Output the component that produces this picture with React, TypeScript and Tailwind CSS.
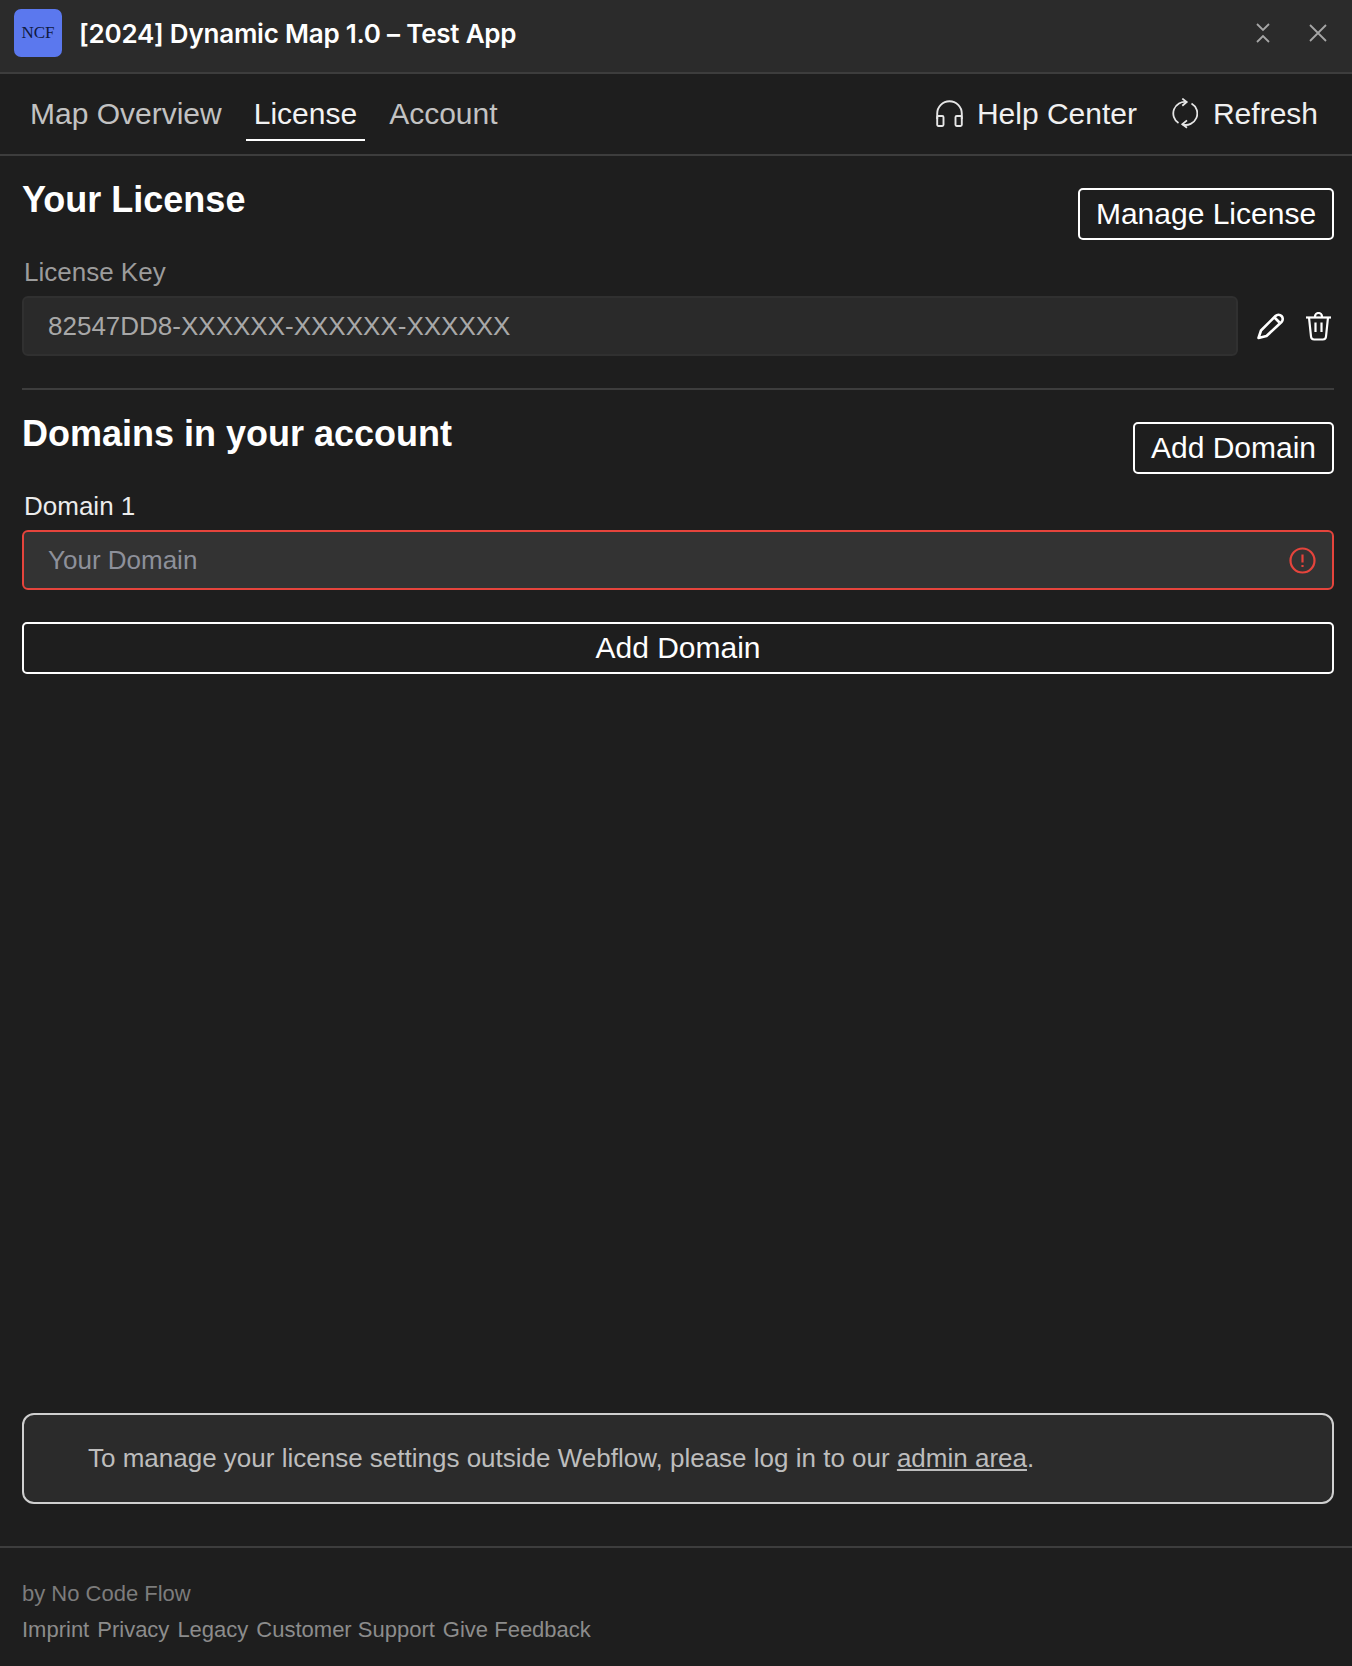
import * as React from "react";

const sans = "font-['Liberation_Sans',Arial,sans-serif]";

// small outline button used in the section headers
function OutlineButton({ children, className = "" }: { children: React.ReactNode; className?: string }) {
  return (
    <button className={`h-[52px] rounded-[5px] border-2 border-white text-[30px] leading-none text-white ${className}`}>
      {children}
    </button>
  );
}

function CollapseIcon() {
  return (
    <svg width="14" height="20" viewBox="0 0 14 20" fill="none" stroke="#a6a6a6" strokeWidth="1.8">
      <path d="M1 1 7 7 13 1" />
      <path d="M1 19 7 13 13 19" />
    </svg>
  );
}

function CloseIcon() {
  return (
    <svg width="18" height="18" viewBox="0 0 18 18" fill="none" stroke="#a6a6a6" strokeWidth="1.8">
      <path d="M1 1 17 17M17 1 1 17" />
    </svg>
  );
}

function HeadphonesIcon() {
  return (
    <svg width="27" height="27" viewBox="0 0 27 27" fill="none" stroke="#e6e6e6" strokeWidth="1.9">
      <path d="M1.2 19V13.5a12.3 12.3 0 0 1 24.6 0V19" />
      <rect x="1.2" y="16" width="6.3" height="10" rx="1.2" />
      <rect x="19.5" y="16" width="6.3" height="10" rx="1.2" />
    </svg>
  );
}

function RefreshIcon() {
  return (
    <svg width="26" height="31" viewBox="0 0 26 31" fill="none" stroke="#e6e6e6" strokeWidth="1.8">
      <path d="M14.5 4A11.5 11.5 0 0 0 6.5 25" />
      <path d="M10.5 26.5A11.5 11.5 0 0 0 19.5 5.5" />
      <path d="M10.3 .6 14.7 4 10.3 7.7" />
      <path d="M15 22.4 10.3 26.3 15 29.8" />
    </svg>
  );
}

function PencilIcon() {
  return (
    <svg width="28" height="28" viewBox="0 0 28 28" fill="none" stroke="#ffffff" strokeWidth="2.6" strokeLinejoin="round">
      <path d="M1.5 26 4 18.5 18.5 4a4.2 4.2 0 0 1 6 6L9.5 24z" />
      <path d="M17.5 5.5 22.5 10.5" />
    </svg>
  );
}

function TrashIcon() {
  return (
    <svg width="27" height="29" viewBox="0 0 27 29" fill="none" stroke="#ffffff" strokeWidth="2.2" strokeLinejoin="round">
      <path d="M1 5.5h25" />
      <path d="M10 5.5V4.5a3.5 3.5 0 0 1 7 0v1" />
      <path d="M4 5.5 6 24.5a3.2 3.2 0 0 0 3.2 3h8.6a3.2 3.2 0 0 0 3.2-3L23 5.5" />
      <path d="M10.5 10.5v9.5M16.5 10.5v9.5" />
    </svg>
  );
}

function AlertIcon() {
  return (
    <svg width="27" height="27" viewBox="0 0 27 27" fill="none" stroke="#e5443c" strokeWidth="2.2">
      <circle cx="13.5" cy="13.5" r="12" />
      <path d="M13.5 7.5v8" />
      <path d="M13.5 18v2" />
    </svg>
  );
}

export default function App() {
  return (
    <div className={`flex h-[1666px] w-[1352px] flex-col bg-[#1e1e1e] ${sans}`}>
      {/* Title bar */}
      <header className="flex h-[74px] shrink-0 items-center border-b-2 border-[#3d3d3d] bg-[#2b2b2b] pb-[6px] pl-[14px]">
        <div className="flex h-[48px] w-[48px] items-center justify-center rounded-[7px] bg-[#5b78ee] font-['Liberation_Serif',serif] text-[17px] text-[#101a40]">
          NCF
        </div>
        <h1 className="ml-[17px] font-['Inter',sans-serif] text-[26px] font-semibold tracking-[-0.22px] text-white">
          [2024] Dynamic Map 1.0 – Test App
        </h1>
        <div className="ml-auto flex items-center">
          <CollapseIcon />
          <div className="mr-[25px] ml-[39px]">
            <CloseIcon />
          </div>
        </div>
      </header>

      {/* Tabs */}
      <nav className="flex h-[82px] shrink-0 items-center border-b-2 border-[#3d3d3d] pl-[22px] text-[30px]">
        <div className="flex items-center">
          <span className="flex h-[54px] items-center border-b-2 border-transparent px-[8px] text-[#c2c2c2]">Map Overview</span>
          <span className="ml-[16px] flex h-[54px] items-center border-b-2 border-white px-[8px] text-[#f2f2f2]">License</span>
          <span className="ml-[16px] flex h-[54px] items-center border-b-2 border-transparent px-[8px] text-[#c2c2c2]">Account</span>
        </div>
        <div className="ml-auto flex items-center pr-[34px] pb-[2px] text-[#f0f0f0]">
          <HeadphonesIcon />
          <span className="ml-[14px]">Help Center</span>
          <div className="ml-[35px]">
            <RefreshIcon />
          </div>
          <span className="ml-[15px]">Refresh</span>
        </div>
      </nav>

      {/* Main content */}
      <main className="flex flex-1 flex-col pr-[18px] pb-[42px] pl-[22px]">
        <section className="border-b-2 border-[#3d3d3d] pt-[22px] pb-[32px]">
          <div className="flex items-start justify-between">
            <h2 className="text-[36px] leading-[44px] font-bold text-white">Your License</h2>
            <OutlineButton className="mt-[10px] w-[256px]">Manage License</OutlineButton>
          </div>
          <label className="mt-[16px] block pl-[2px] text-[26px] leading-[32px] text-[#9c9c9c]">License Key</label>
          <div className="mt-[8px] flex items-center">
            <div className="flex h-[60px] w-[1216px] items-center rounded-[6px] border-2 border-[#303030] bg-[#2a2a2a] pl-[24px] text-[26px] text-[#a8a8a8]">
              82547DD8-XXXXXX-XXXXXX-XXXXXX
            </div>
            <div className="ml-[19px]">
              <PencilIcon />
            </div>
            <div className="ml-[20px]">
              <TrashIcon />
            </div>
          </div>
        </section>

        <section className="pt-[22px]">
          <div className="flex items-start justify-between">
            <h2 className="text-[36px] leading-[44px] font-bold text-white">Domains in your account</h2>
            <OutlineButton className="mt-[10px] w-[201px]">Add Domain</OutlineButton>
          </div>
          <label className="mt-[16px] block pl-[2px] text-[26px] leading-[32px] text-[#ececec]">Domain 1</label>
          <div className="mt-[8px] flex h-[60px] items-center justify-between rounded-[6px] border-2 border-[#e5443c] bg-[#333333] pr-[16px] pl-[24px] text-[26px] text-[#8d909a]">
            Your Domain
            <AlertIcon />
          </div>
          <OutlineButton className="mt-[32px] w-full">Add Domain</OutlineButton>
        </section>

        <div className="mt-auto flex h-[91px] items-center rounded-[12px] border-2 border-[#cfcfcf] bg-[#2b2b2b] pl-[64px] text-[26px] text-[#bdbdbd]">
          <p>
            To manage your license settings outside Webflow, please log in to our <a className="underline">admin area</a>.
          </p>
        </div>
      </main>

      {/* Footer */}
      <footer className="h-[120px] shrink-0 border-t-2 border-[#3d3d3d] pt-[30px] pl-[22px] text-[22px] leading-[32px]">
        <p className="text-[#7c7c7c]">by No Code Flow</p>
        <div className="mt-[4px] flex gap-[8px] text-[#8c8c8c]">
          <a>Imprint</a>
          <a>Privacy</a>
          <a>Legacy</a>
          <a>Customer Support</a>
          <a>Give Feedback</a>
        </div>
      </footer>
    </div>
  );
}
